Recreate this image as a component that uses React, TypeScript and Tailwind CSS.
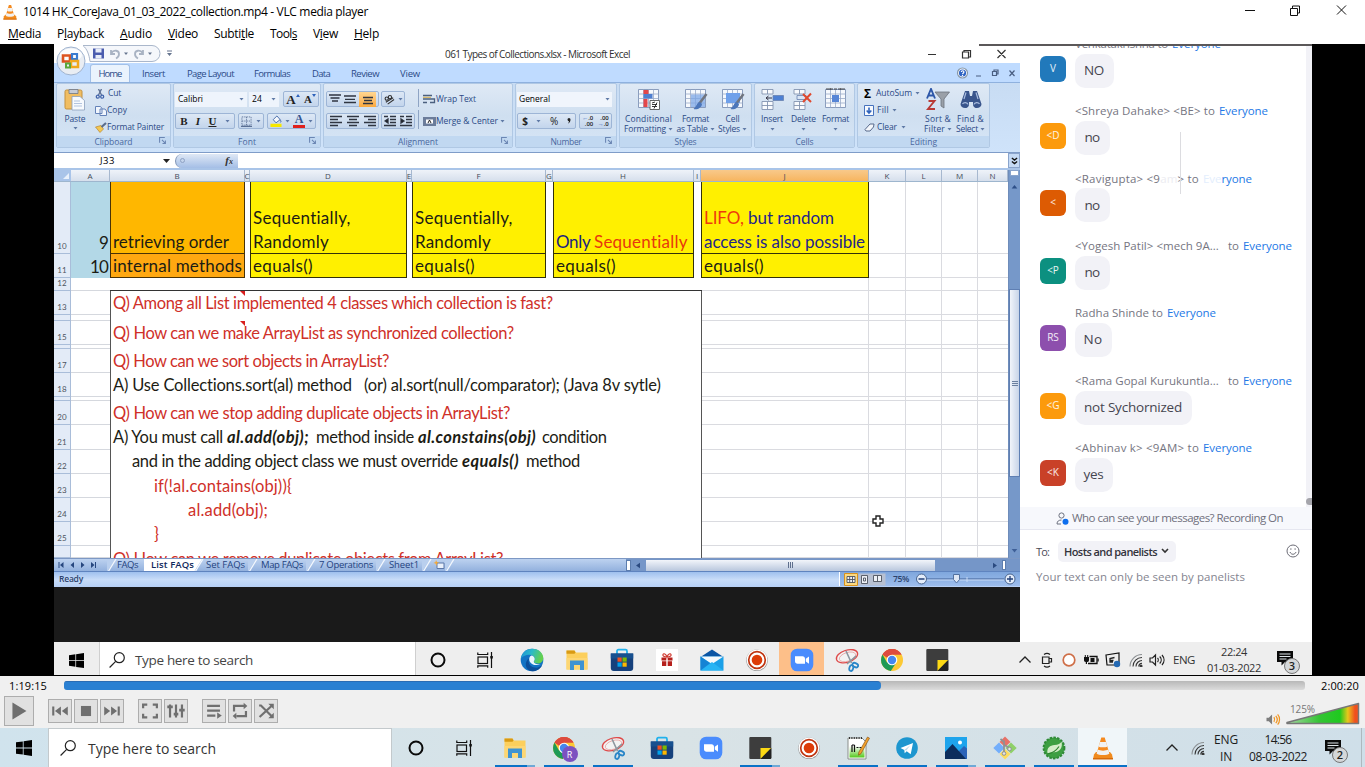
import React, { useLayoutEffect, useRef, useState } from "react";

type Kids = { children?: React.ReactNode };

/* Text that is spaced so that it fills a given width exactly. */
function T({ w, c = "", children }: { w: number; c?: string } & Kids) {
  const ref = useRef<HTMLSpanElement>(null);
  const [gap, setGap] = useState(0);
  useLayoutEffect(() => {
    const el = ref.current;
    if (!el) return;
    const n = (el.textContent || "").length;
    setGap((w - el.getBoundingClientRect().width) / Math.max(n, 1));
  }, [w]);
  return (
    <span className={`block shrink-0 whitespace-pre ${c}`} style={{ width: w }}>
      <span ref={ref} className="inline-block" style={{ letterSpacing: gap }}>
        {children}
      </span>
    </span>
  );
}

/* ---------- application icons ---------- */

const Cone = ({ c }: { c: string }) => (
  <svg viewBox="0 0 24 24" className={c}>
    <path d="M3 18.5L5 16h14l2 2.500 1 4.500H2z" fill="#f08a1d" />
    <path d="M10.300 1.500h3.400L18.500 18c-2 2.300-11 2.300-13 0z" fill="#f58a1f" />
    <path d="M9 6h6l1.300 4.400c-2 1.200-6.600 1.200-8.600 0zM6.800 13.500c2.500 1.500 8 1.500 10.400 0l1.200 4c-2 2-10.800 2-12.800 0z" fill="#f1f1f1" />
    <path d="M2 22h20v1.500H2z" fill="#d66a0a" />
  </svg>
);
const WinLogo = ({ c }: { c: string }) => (
  <svg viewBox="0 0 16 16" className={c} fill="#000">
    <path d="M0 2.300L6.800 1.400V7.600H0zM7.600 1.300L16 0v7.600H7.600zM0 8.400h6.800v6.200L0 13.700zM7.600 8.400H16V16l-8.400-1.200z" />
  </svg>
);
const Magnifier = ({ c }: { c: string }) => (
  <svg viewBox="0 0 16 16" className={c} fill="none" stroke="#222" strokeWidth="1.200">
    <circle cx="10.300" cy="5.700" r="5" />
    <path d="M6.700 9.300L.6 15.500" />
  </svg>
);
const Cortana = () => (
  <svg viewBox="0 0 16 16" className="size-4 shrink-0">
    <circle cx="8" cy="8" r="6.500" fill="none" stroke="#0a0a0a" strokeWidth="2" />
  </svg>
);
const TaskView = () => (
  <svg viewBox="0 0 16 16" className="size-4 shrink-0" fill="none" stroke="#111" strokeWidth="1.200">
    <rect x="1" y="5" width="9.500" height="6.500" />
    <path d="M.8.500v2h9.900v-2M.8 15.800v-2h9.900v2M14.500 0v16" />
    <rect x="13.300" y="4" width="2.500" height="2.500" fill="#111" stroke="none" />
  </svg>
);
const Edge = () => (
  <svg viewBox="0 0 24 24" className="size-6 shrink-0">
    <defs>
      <linearGradient id="eg" x1="0" y1="0" x2="1" y2=".3">
        <stop offset="0" stopColor="#1b8fd6" />
        <stop offset=".5" stopColor="#2bb9c9" />
        <stop offset="1" stopColor="#63d04e" />
      </linearGradient>
    </defs>
    <circle cx="12" cy="12" r="11.300" fill="#1273c4" />
    <path d="M.9 11C1.500 4.500 6.500.7 12.300.7c7 0 11 5 11 9.300 0 3.500-2.500 5.500-5.500 5.500-2.500 0-4-1-4-2 0-.8.900-1 .9-2.700 0-2-2-4-5-4C5.500 6.800 2 8.500.9 11z" fill="url(#eg)" />
    <path d="M9.500 10c-2 3-.8 8.500 5 9.500 3.200.6 6-.8 7.500-2.500-1.500 4-5.500 6.300-9.700 6.300C5 22.500 3.500 13.500 9.500 10z" fill="#0c4f9a" />
    <path d="M14.700 11c0-1.500-1-3-3-3.500-2.300.5-3.200 3.500-1.700 6.500 2 3.500 7 4 11.500 1.800-3.500 1.200-7.700.2-7.700-2.200 0-.8.900-1 .9-2.600z" fill="#eaf5fb" />
  </svg>
);
const Folder = () => (
  <svg viewBox="0 0 24 24" className="size-6 shrink-0">
    <path d="M1.500 2.500h8l1.500 2h11.500v17h-21z" fill="#fccf5c" />
    <path d="M1.500 2.500h8l1 2-1 1.200h-8z" fill="#d99a13" />
    <path d="M1.500 10h21v11.500h-21z" fill="#fdd673" />
    <path d="M5 22v-9.500h14V22h-4v-5H9v5z" fill="#3f93d2" />
  </svg>
);
const Store = () => (
  <svg viewBox="0 0 24 24" className="size-6 shrink-0">
    <path d="M7 6V3.200c0-.9.600-1.500 1.400-1.500h7.200c.8 0 1.400.6 1.400 1.500V6" fill="none" stroke="#21b1ec" strokeWidth="1.800" />
    <path d="M.8 5.500h22.400V20c0 2-1 3-3 3H3.800c-2 0-3-1-3-3z" fill="#16417c" />
    <path d="M.8 5.500h22.400v5H.8z" fill="#17508f" />
    <path d="M7.500 9.500h4.200v4.200H7.500z" fill="#f05021" />
    <path d="M12.500 9.500h4.200v4.200h-4.200z" fill="#7eb900" />
    <path d="M7.500 14.500h4.200v4.200H7.500z" fill="#00a2ec" />
    <path d="M12.500 14.500h4.200v4.200h-4.200z" fill="#fdb800" />
  </svg>
);
const Gift = () => (
  <svg viewBox="0 0 24 24" className="size-6 shrink-0">
    <path d="M1 1h22v22H1z" fill="#fff" />
    <path d="M6.500 9.500h4.800v3H6.500zM12.700 9.500h4.800v3h-4.800zM7 13.300h4.300V18H7zM12.700 13.300H17V18h-4.300z" fill="#b5201c" />
    <path d="M12 9c-3 0-4.500-1-4-2.500s3-.8 4 2.500c1-3.300 3.500-4 4-2.500S15 9 12 9z" fill="none" stroke="#d03a30" strokeWidth="1.200" />
  </svg>
);
const Mail = () => (
  <svg viewBox="0 0 24 24" className="size-6 shrink-0">
    <path d="M.5 9L12 1.500 23.500 9z" fill="#0b56a5" />
    <path d="M.5 8.500h23v14H.5z" fill="#1ba0e8" />
    <path d="M.5 8.500h23L12 16z" fill="#f5f9fc" />
    <path d="M.5 22.500L12 14l11.500 8.500z" fill="#27b4f4" />
    <path d="M.5 8.500v14L10 15.300z" fill="#1583d4" />
  </svg>
);
const Rec = () => (
  <svg viewBox="0 0 24 24" className="size-6 shrink-0">
    <circle cx="12" cy="12.300" r="10.800" fill="#9b9b9b" />
    <circle cx="12" cy="11.800" r="10.400" fill="#fff" />
    <circle cx="12" cy="12" r="8.300" fill="none" stroke="#bf3511" strokeWidth="1.700" />
    <circle cx="12" cy="12" r="5.300" fill="#dd3c08" />
  </svg>
);
const Zoom = () => (
  <svg viewBox="0 0 24 24" className="size-6 shrink-0">
    <rect x=".7" y=".7" width="22.600" height="22.600" rx="6.500" fill="#4a8cfd" />
    <path d="M5 8.300h7.500c1.500 0 2.500 1 2.500 2.500v5H7.500C6 15.800 5 14.800 5 13.300zM15.800 10.800L19 8.500v7.200l-3.200-2.300z" fill="#fff" />
  </svg>
);
const Snip = () => (
  <svg viewBox="0 0 24 24" className="size-6 shrink-0" fill="none">
    <ellipse cx="12" cy="8.200" rx="11" ry="6" transform="rotate(-18 12 8.200)" fill="#f3f3f3" stroke="#de4a4a" strokeWidth="1.300" />
    <ellipse cx="12.500" cy="9" rx="8.500" ry="4.300" transform="rotate(-18 12 9)" stroke="#e59a9a" strokeWidth=".7" />
    <path d="M11 3l5.500 12M21 8l-9 8" stroke="#8c979f" strokeWidth="1.600" />
    <ellipse cx="20.300" cy="17" rx="3" ry="2" transform="rotate(25 20 17)" stroke="#2a86c8" strokeWidth="1.800" />
    <ellipse cx="16.300" cy="20" rx="1.900" ry="3" transform="rotate(15 16 20)" stroke="#2a86c8" strokeWidth="1.800" />
  </svg>
);
const Chrome = ({ badge }: { badge?: boolean }) => (
  <span className="relative block size-6 shrink-0">
    <svg viewBox="0 0 24 24" className="size-6">
      <circle cx="12" cy="12" r="11" fill="#fcc934" />
      <path d="M12 12L2.500 6.500A11 11 0 0 1 21.500 6.500H12z" fill="#dd4b3e" />
      <path d="M12 12L7 14.500 2.500 6.500a11 11 0 0 0 8.300 16.400L16 15z" fill="#1e9a55" />
      <path d="M2.500 6.500A11 11 0 0 1 21.500 6.500H12a5.500 5.500 0 0 0-5 3.300z" fill="#dd4b3e" />
      <circle cx="12" cy="12" r="5.300" fill="#fff" />
      <circle cx="12" cy="12" r="4.200" fill="#4587ee" />
    </svg>
    {badge && (
      <span className="absolute left-[10px] top-[10px] flex size-4 items-center justify-center rounded-full bg-[#7c51c0] text-[9px] leading-none text-white">R</span>
    )}
  </span>
);
const Sticky = () => (
  <svg viewBox="0 0 24 24" className="size-6 shrink-0">
    <rect x="1.300" y="1" width="22" height="22" rx="1" fill="#3d3d3d" />
    <path d="M12.500 12H23.300L12.500 23z" fill="#fcd914" />
    <path d="M23.300 12L12.500 23h9.800l1-1z" fill="#222" />
  </svg>
);
const Notepad = () => (
  <svg viewBox="0 0 24 24" className="size-6 shrink-0">
    <defs>
      <linearGradient id="ng" x1="0" y1="0" x2="0" y2="1">
        <stop offset=".2" stopColor="#fff" />
        <stop offset="1" stopColor="#54c91c" />
      </linearGradient>
    </defs>
    <path d="M2 2h14l4 4v17H2z" fill="#fff" stroke="#8a8f8a" />
    <path d="M3.500 7h15v14.500h-15z" fill="url(#ng)" />
    <path d="M3 2h14" stroke="#333" strokeDasharray="1 1.400" strokeWidth="2" />
    <path d="M6 16V9M8.500 16V9M6 9h2.500M10.500 11.500h2M13.500 11.500h2" stroke="#111" strokeWidth="1.200" fill="none" />
    <path d="M21.500 1l2 1.200-8.500 15.500-2.500 1.500.3-3z" fill="#f2a02c" stroke="#7a4a12" strokeWidth=".6" />
  </svg>
);
const Telegram = () => (
  <svg viewBox="0 0 24 24" className="size-6 shrink-0">
    <circle cx="12" cy="12" r="10.800" fill="#1d96cf" />
    <path d="M5.500 12L18 7l-2.300 11.300-4-3-2 1.900-.4-3.200z" fill="#fff" />
    <path d="M9.300 14l6-4.800-4 5.300z" fill="#b9d9ea" />
  </svg>
);
const Photos = () => (
  <svg viewBox="0 0 24 24" className="size-6 shrink-0">
    <path d="M1 1h22v22H1z" fill="#1ea4ec" />
    <path d="M23 12.500l-3-2.500-6 6 4 7h5z" fill="#2c63b8" />
    <path d="M1 16l7.500-8L22 23H1z" fill="#0c2d5c" />
    <circle cx="16" cy="6.500" r="2" fill="#fff" />
  </svg>
);
const Git = () => (
  <svg viewBox="0 0 24 24" className="size-6 shrink-0">
    <path d="M12 .5l5.500 5.500-5.500 5L6.500 6z" fill="#e77167" />
    <path d="M6 6.500l5.500 5.500-5.500 5.500L.3 12z" fill="#73aefb" />
    <path d="M18 6.500l5.700 5.500-5.700 5.500-5.500-5.500z" fill="#8fd069" />
    <path d="M12 13l5.500 5L12 23.500 6.500 18z" fill="#fcdc60" />
    <path d="M11 4.500v13M11 9c3 1 5 2 5.500 4M11 6L7.500 3" stroke="#8d9295" strokeWidth="1.700" fill="none" />
    <circle cx="11" cy="17.500" r="1.800" fill="#e5e5e5" stroke="#8d9295" />
    <circle cx="16.500" cy="13" r="1.800" fill="#e5e5e5" stroke="#8d9295" />
  </svg>
);
const Spring = () => (
  <svg viewBox="0 0 24 24" className="size-6 shrink-0">
    <circle cx="12" cy="12" r="10.400" fill="#3d9f42" stroke="#2f8a36" strokeWidth="2" strokeDasharray="2.500 1.200" />
    <path d="M19.500 5.500c1.500 6-1.500 10.500-7.500 10.800-3 .2-5 .3-6.500 1.200C4.500 11.500 8 9.500 12.500 9c3.500-.3 6-1 7-3.500z" fill="#d3ecc8" />
    <path d="M5 18c5-.5 9-3 12-7.500" stroke="#2d8430" strokeWidth="1.200" fill="none" />
  </svg>
);
const Chevron = () => (
  <svg viewBox="0 0 14 14" className="size-3.5 shrink-0" fill="none" stroke="#222" strokeWidth="1.300">
    <path d="M1.500 9.500L7 4l5.500 5.500" />
  </svg>
);
const Wifi = () => (
  <svg viewBox="0 0 14 14" className="size-3.5 shrink-0" fill="none" stroke="#333" strokeWidth="1.100">
    <path d="M1 13.500A12 12 0 0 1 13 1.500" stroke="#8b8f92" />
    <path d="M4 13.500a9 9 0 0 1 9-9M7 13.500a6 6 0 0 1 6-6M9.700 13.500a3.500 3.500 0 0 1 3.300-3.300" />
    <circle cx="12" cy="13" r="1" fill="#333" />
  </svg>
);
const Notif = ({ n }: { n: string }) => (
  <span className="relative block h-6 w-6 shrink-0">
    <svg viewBox="0 0 24 24" className="size-6">
      <path d="M1 2h16v11H9l-3.500 3.500V13H1z" fill="#0a0a0a" />
      <path d="M3.500 5h11M3.500 7.500h11M3.500 10h7" stroke="#dfe6ea" strokeWidth="1" />
    </svg>
    <span className="absolute left-[8px] top-[9px] flex size-4 items-center justify-center rounded-full border border-[#777] bg-[#d4d7d9] text-[11px] font-semibold leading-none text-[#222]">{n}</span>
  </span>
);

/* ---------- Excel ---------- */

const Caret = ({ c = "" }: { c?: string }) => (
  <svg viewBox="0 0 5 3" className={`h-[3px] w-[5px] shrink-0 ${c}`}>
    <path d="M.5 0h4L2.500 2.500z" fill="#5f7aa6" />
  </svg>
);
const Launcher = () => (
  <svg viewBox="0 0 6 6" className="absolute right-[4px] top-[1px] size-[7px]" fill="none" stroke="#6b86b3" strokeWidth=".9">
    <path d="M.5 5V.5H5M2.500 2.500l3 3M5.500 3v2.500H3" />
  </svg>
);
function Group({ c, label, lw, launch, children }: { c: string; label: string; lw: number; launch?: boolean } & Kids) {
  return (
    <div className={`flex h-[65px] shrink-0 flex-col overflow-hidden rounded-[2px] border border-[#b0c8e4] bg-linear-to-b from-[#dfe9f5] via-[#cfdff0] to-[#d6e5f6] ${c}`}>
      <div className="h-[52px]">{children}</div>
      <div className="relative flex h-[11px] items-center justify-center bg-[#c1d8f1] pt-px leading-none text-[#4b68a0]">
        <T w={lw}>{label}</T>
        {launch && <Launcher />}
      </div>
    </div>
  );
}
const Box = ({ c = "", children }: { c?: string } & Kids) => (
  <div className={`flex h-4 shrink-0 items-center justify-around rounded-[2px] border border-[#9db5d6] bg-linear-to-b from-[#dde8f5] to-[#c3d5ec] ${c}`}>{children}</div>
);
const Lines = ({ d }: { d: string }) => (
  <svg viewBox="0 0 12 12" className="size-3 shrink-0" stroke="#2f3541" strokeWidth="1.300">
    <path d={d} />
  </svg>
);
const Scissors = () => (
  <svg viewBox="0 0 10 10" className="size-[10px]" fill="none" stroke="#4365ab" strokeWidth="1.300">
    <path d="M3.500 0l3 6M6.500 0l-3 6" stroke="#5c6f93" />
    <circle cx="2.800" cy="7.700" r="1.500" />
    <circle cx="7.200" cy="7.700" r="1.500" />
  </svg>
);
const CopyI = () => (
  <svg viewBox="0 0 12 10" className="h-[10px] w-3">
    <path d="M.5.500h5l1.500 2v5H.5zM5 3h5l1.500 2v4.500H5z" fill="#f1f6fd" stroke="#6482b8" />
  </svg>
);
const Brush = () => (
  <svg viewBox="0 0 12 11" className="h-[11px] w-3">
    <path d="M.5 5L6 3.500 8.500 7 5 10.500z" fill="#f4c753" stroke="#b07c22" strokeWidth=".6" />
    <path d="M6.500 5L11 1" stroke="#5b6d8c" strokeWidth="2.200" />
  </svg>
);
const PasteI = () => (
  <svg viewBox="0 0 22 23" className="h-[23px] w-[22px]">
    <rect x="1" y="2" width="17" height="19" rx="1.500" fill="#f0bd62" stroke="#c3913f" />
    <path d="M5 1.500h9v4H5z" fill="#c7ccd6" stroke="#6e7787" strokeWidth=".8" />
    <path d="M8 8.500h8l4.500 4V22H8z" fill="#f7fafe" stroke="#8c9fbd" strokeWidth=".8" />
    <path d="M10 13h6M10 15.500h8M10 18h8" stroke="#b3c4df" />
  </svg>
);
const TableI = ({ kind }: { kind: "cond" | "table" | "cell" | "ins" | "del" | "fmt" }) => (
  <svg viewBox="0 0 24 23" className="h-[23px] w-6">
    {kind !== "ins" && kind !== "del" && (
      <>
        <path d="M1.500 1.500h20v18h-20z" fill="#f6f9fd" stroke="#7f93b5" strokeWidth=".9" />
        <path d="M1.500 6h20M1.500 10.500h20M1.500 15h20M6.500 1.500v18M11.500 1.500v18M16.500 1.500v18" stroke="#9aabc8" strokeWidth=".8" />
      </>
    )}
    {kind === "cond" && (
      <>
        <path d="M6.500 2h5v4h-5zM6.500 11h4v8h-4z" fill="#e3474a" />
        <path d="M6.500 6h9v4.500h-9z" fill="#4f7fd0" />
        <path d="M13 12.500h9.500v9H13z" fill="#fff" stroke="#555" strokeWidth=".9" />
        <path d="M15 15l3-1M15 16.500h5M15 18.500h5M17 20.500l3-6" stroke="#222" strokeWidth=".9" />
      </>
    )}
    {kind === "table" && <path d="M7 6.500h14v12.500H7z" fill="#7ea7e6" opacity=".75" />}
    {kind === "cell" && <path d="M5 5h14v10H5z" fill="#6fa0ea" />}
    {(kind === "table" || kind === "cell") && (
      <>
        <path d="M22.500 6L15 16" stroke="#70757f" strokeWidth="2.500" />
        <path d="M16 14c-3 0-3 4-6.500 7 4 1 8-1 8.500-5z" fill="#4b76ba" />
      </>
    )}
    {(kind === "ins" || kind === "del") && (
      <>
        <path d="M2 1.500h11V6H2zM2 13.500h11v8H2zM7.500 1.500V6M7.500 13.500v8M2 17.500h11" fill="#f8fafd" stroke="#8394b0" strokeWidth=".9" />
        <path d={kind === "ins" ? "M13 7.500h10.500v5H13z" : "M5 7.500h9v4H5z"} fill={kind === "ins" ? "#4d80d3" : "#dbe6f5"} stroke="#6a83b0" strokeWidth=".8" />
      </>
    )}
    {kind === "ins" && <path d="M6 10h6M8.500 8L6 10l2.500 2" stroke="#334" fill="none" />}
    {kind === "del" && <path d="M11 6l8 8M19 5.500L11 14" stroke="#e0492e" strokeWidth="2" />}
    {kind === "fmt" && (
      <>
        <path d="M8 7h7v7H8z" fill="#5685d6" />
        <path d="M2 1h19M6 0v2M17 0v2" stroke="#333" strokeWidth=".9" strokeDasharray="3 1" />
      </>
    )}
  </svg>
);

function Big({ c, icon, l1, w1, l2, w2 }: { c: string; icon: React.ReactNode; l1: string; w1: number; l2?: string; w2?: number }) {
  return (
    <div className={`flex shrink-0 flex-col items-center pt-[4px] ${c}`}>
      {icon}
      <div className="mt-[3px] flex h-[10px] items-center"><T w={w1}>{l1}</T></div>
      <div className="flex h-[10px] items-center gap-[2px]">
        {l2 && w2 && <T w={w2}>{l2}</T>}
        <Caret />
      </div>
    </div>
  );
}

function Ribbon() {
  return (
    <div className="flex h-[70px] items-start gap-[2px] border-t border-[#8fb1de] bg-linear-to-b from-[#c8dcf3] to-[#cfe3fa] pl-[2px] text-[8.500px] leading-none text-[#2c4a86]">
      <Group c="w-[115px]" label="Clipboard" lw={38} launch>
        <div className="flex">
          <div className="flex w-[30px] shrink-0 flex-col items-center pl-[6px] pt-[4px]">
            <PasteI />
            <div className="mt-[3px] flex h-[10px] items-center"><T w={21}>Paste</T></div>
            <Caret c="mt-[3px]" />
          </div>
          <div className="flex flex-col pl-[8px] pt-px">
            <div className="flex h-[17px] items-center gap-[3px]"><Scissors /><T w={13}>Cut</T></div>
            <div className="flex h-[17px] items-center"><CopyI /><T w={20}>Copy</T></div>
            <div className="flex h-[16px] items-center"><Brush /><T w={57}>Format Painter</T></div>
          </div>
        </div>
      </Group>
      <Group c="w-[148px]" label="Font" lw={18} launch>
        <div className="flex h-[23px] items-end pl-[1px] text-black">
          <div className="flex h-[15px] w-[72px] items-center justify-between bg-[#eef4fc] px-[3px]"><T w={25}>Calibri</T><Caret /></div>
          <div className="ml-[2px] flex h-[15px] w-[30px] items-center justify-between bg-[#eef4fc] px-[3px]"><T w={10}>24</T><Caret /></div>
          <Box c="ml-[4px] w-[36px]">
            <span className="flex items-start font-['Liberation_Serif'] text-[13px] font-bold leading-[13px] text-[#222]">A<svg viewBox="0 0 4 3" className="mt-px h-[3px] w-[4px]"><path d="M0 3h4L2 0z" fill="#2f63bb" /></svg></span>
            <span className="flex items-start font-['Liberation_Serif'] text-[11px] font-bold leading-[13px] text-[#222]">A<svg viewBox="0 0 4 3" className="mt-px h-[3px] w-[4px]"><path d="M0 0h4L2 3z" fill="#2f63bb" /></svg></span>
          </Box>
        </div>
        <div className="flex h-[22px] items-end pl-[1px] text-[#222]">
          <Box c="w-[60px] font-['Liberation_Serif'] text-[11px]"><b>B</b><b className="italic">I</b><b className="underline">U</b><Caret /></Box>
          <Box c="ml-[3px] w-[26px]">
            <svg viewBox="0 0 12 12" className="size-[11px]" stroke="#5a6f94" strokeWidth=".9" fill="none"><path d="M1 1h10v9H1zM6 1v9M1 5.500h10" strokeDasharray="1.500 1" /><path d="M0 11.300h12" strokeWidth="1.300" /></svg>
            <Caret />
          </Box>
          <Box c="ml-[3px] w-[49px]">
            <svg viewBox="0 0 12 13" className="h-[12px] w-3"><path d="M3 5l4-4 3.500 4L6 8.500z" fill="#f5f8fc" stroke="#4469a8" /><path d="M10 5c2 1 1.500 3 .5 3" stroke="#4469a8" fill="none" /><path d="M0 9.500h12V13H0z" fill="#f7e800" /></svg>
            <Caret />
            <span className="flex h-[14px] w-3 flex-col items-center border-b-[3px] border-[#e0201c] font-['Liberation_Serif'] text-[12px] font-bold leading-[11px] text-[#33528f]">A</span>
            <Caret />
          </Box>
        </div>
      </Group>
      <Group c="w-[190px]" label="Alignment" lw={40} launch>
        <div className="flex h-[23px] items-end pl-[2px]">
          <Box c="w-[53px]">
            <Lines d="M0 2h12M1.500 5h9M3 8h6" />
            <Lines d="M0 3h12M1 6.300h10M0 9.500h12" />
            <span className="flex h-[15px] w-[17px] items-center justify-center bg-linear-to-b from-[#ffd690] to-[#fba93c]"><Lines d="M1 4.500h10M2 7.500h8M1 10.500h10" /></span>
          </Box>
          <Box c="ml-[2px] w-[24px]">
            <svg viewBox="0 0 12 12" className="size-[11px]" stroke="#333" strokeWidth="1.200" fill="none"><circle cx="3" cy="5" r="1.800" /><circle cx="6.500" cy="3.500" r="1.800" /><path d="M2 9l8-5M4 11l7-5" /></svg>
            <Caret />
          </Box>
          <span className="ml-[13px] h-[18px] w-px bg-[#8ea4c4]" />
          <div className="ml-[4px] flex h-4 items-center">
            <svg viewBox="0 0 13 11" className="h-[11px] w-[13px]" stroke="#4b607f" fill="none"><path d="M0 1.500h9M0 5h11.500v3.500H7M0 8.500h4" strokeWidth="1.300" /><path d="M0 3.300h8" stroke="#d9b04c" /></svg>
            <T w={40}>Wrap Text</T>
          </div>
        </div>
        <div className="flex h-[22px] items-end pl-[2px]">
          <Box c="w-[53px]">
            <Lines d="M0 1.500h12M0 4.500h8M0 7.500h12M0 10.500h8" />
            <Lines d="M0 1.500h12M2 4.500h8M0 7.500h12M2 10.500h8" />
            <Lines d="M0 1.500h12M4 4.500h8M0 7.500h12M4 10.500h8" />
          </Box>
          <Box c="ml-[2px] w-[34px]">
            <Lines d="M0 1.500h4M6 1.500h6M6 4.500h6M6 7.500h6M0 10.500h12M1 6l3-2v4z" />
            <Lines d="M0 1.500h4M6 1.500h6M6 4.500h6M6 7.500h6M0 10.500h12M4 6L1 4v4z" />
          </Box>
          <span className="ml-[3px] h-[19px] w-px bg-[#8ea4c4]" />
          <div className="ml-[4px] flex h-4 items-center">
            <svg viewBox="0 0 13 11" className="h-[11px] w-[13px]"><path d="M0 1h13v9H0z" fill="#6b7d9b" /><path d="M3 3.500h7v4H3z" fill="#fff" /><path d="M5 7l1.500-3L8 7" stroke="#222" fill="none" /></svg>
            <T w={62}>Merge &amp; Center</T>
            <Caret c="ml-[2px]" />
          </div>
        </div>
      </Group>
      <Group c="w-[102px]" label="Number" lw={31} launch>
        <div className="flex h-[23px] items-end pl-[1px] text-black">
          <div className="flex h-[15px] w-[95px] items-center justify-between bg-[#f0f5fc] px-[2px]"><T w={31}>General</T><Caret /></div>
        </div>
        <div className="flex h-[22px] items-end pl-[1px] text-[10px] text-[#222]">
          <Box c="w-[59px]">
            <b>$</b><Caret /><span>%</span>
            <svg viewBox="0 0 4 6" className="h-[6px] w-[4px]"><path d="M.5 1.500a1.500 1.500 0 1 1 3 0C3.500 3.500 2.500 5 1 5.500c.8-1 1-1.700.8-2.500C1 3 .5 2.300.5 1.500z" fill="#222" /></svg>
          </Box>
          <Box c="ml-[3px] w-[33px] text-[6px] leading-[6px]">
            <span className="text-right font-semibold"><b className="text-[#3461b5]">←</b>.0<br />.00</span>
            <span className="text-right font-semibold">.00<br /><b className="text-[#3461b5]">→</b>.0</span>
          </Box>
        </div>
      </Group>
      <Group c="w-[133px]" label="Styles" lw={22}>
        <div className="flex pl-[2px]">
          <Big c="w-[53px]" icon={<TableI kind="cond" />} l1="Conditional" w1={47} l2="Formatting" w2={42} />
          <Big c="w-[41px]" icon={<TableI kind="table" />} l1="Format" w1={27} l2="as Table" w2={31} />
          <Big c="w-[33px]" icon={<TableI kind="cell" />} l1="Cell" w1={14} l2="Styles" w2={22} />
        </div>
      </Group>
      <Group c="w-[101px]" label="Cells" lw={18}>
        <div className="flex pl-[2px]">
          <Big c="w-[30px]" icon={<TableI kind="ins" />} l1="Insert" w1={22} />
          <Big c="w-[33px]" icon={<TableI kind="del" />} l1="Delete" w1={25} />
          <Big c="w-[31px]" icon={<TableI kind="fmt" />} l1="Format" w1={27} />
        </div>
      </Group>
      <Group c="w-[133px]" label="Editing" lw={27}>
        <div className="flex">
          <div className="flex w-[62px] shrink-0 flex-col pl-[6px] pt-px">
            <div className="flex h-[17px] items-center"><b className="w-[13px] text-[12px] text-black">Σ</b><T w={36}>AutoSum</T><Caret c="ml-[3px]" /></div>
            <div className="flex h-[17px] items-center">
              <svg viewBox="0 0 10 11" className="mr-[3px] h-[11px] w-[10px]"><path d="M.5.500h9v10h-9z" fill="#f7fafe" stroke="#4672bd" /><path d="M5 2.500v5M2.700 5.500L5 8l2.300-2.500" stroke="#2f63bb" strokeWidth="1.600" fill="none" /></svg>
              <T w={12}>Fill</T><Caret c="ml-[3px]" />
            </div>
            <div className="flex h-[16px] items-center">
              <svg viewBox="0 0 11 9" className="mr-[2px] h-[9px] w-[11px]"><path d="M1 6.500L6 1h4L9.500 4 6 8H2z" fill="#f4f7fb" stroke="#586a8c" /></svg>
              <T w={20}>Clear</T><Caret c="ml-[4px]" />
            </div>
          </div>
          <Big
            c="ml-[1px] w-[34px]"
            icon={
              <svg viewBox="0 0 24 23" className="h-[23px] w-6">
                <path d="M1 10.500L5 1l4 9.500M2.500 7.500h5" stroke="#2d57a8" strokeWidth="1.900" fill="none" />
                <path d="M2.500 13h6L2 21h7" stroke="#b83a36" strokeWidth="1.900" fill="none" />
                <path d="M9 4h14.500L18 11v9l-3-2v-7z" fill="#9aa0a8" stroke="#6d747e" strokeWidth=".8" />
              </svg>
            }
            l1="Sort &amp;" w1={26} l2="Filter" w2={21}
          />
          <Big
            c="w-[31px]"
            icon={
              <svg viewBox="0 0 24 23" className="h-[23px] w-6">
                <path d="M6 3h4l1 5h2l1-5h4l4.500 13c0 5-8 5.500-8.500 1v-3h-4v3c-.5 4.500-8.500 4-8.500-1z" fill="#39558c" />
                <path d="M3.500 16c1-2 5-2 5.500.5M15 16.500c.5-2.500 4.500-2.500 5.500-.5M7 4.500L5 11M17 4.500L19 11" stroke="#a9bddf" strokeWidth="1.200" fill="none" />
              </svg>
            }
            l1="Find &amp;" w1={27} l2="Select" w2={22}
          />
        </div>
      </Group>
    </div>
  );
}

/* ---------- worksheet ---------- */

const YCELL = "shrink-0 border-x border-b border-[#33310a] bg-[#fff000] pl-[2px] *:translate-y-px";

function RowHead({ n }: { n: string }) {
  return (
    <div className="flex w-[17px] shrink-0 items-end justify-center border-b border-r border-[#a9bdd9] bg-[#e3ebf7] pb-[3px] text-[8px] leading-none text-[#4d5460]">{n}</div>
  );
}
function TailCells() {
  return (
    <>
      <div className="w-[37px] shrink-0 border-b border-r border-[#dadbe0]" />
      <div className="w-[36px] shrink-0 border-b border-r border-[#dadbe0]" />
      <div className="w-[36px] shrink-0 border-b border-r border-[#dadbe0]" />
      <div className="w-[30px] shrink-0 border-b border-[#dadbe0]" />
    </>
  );
}
function NoteRow({ h, n = "", mark, lift, children }: { h: string; n?: string; mark?: boolean; lift?: boolean } & Kids) {
  return (
    <div className={`flex shrink-0 overflow-hidden text-[16.500px] ${h}`}>
      <RowHead n={n} />
      <div className="w-[39px] shrink-0 border-b border-[#d5d8de]" />
      <div className={`relative flex w-[592px] shrink-0 items-end border-x border-[#555] pl-[2px] ${lift ? "*:-translate-y-px" : ""}`}>
        {children}
        {mark && (
          <svg viewBox="0 0 5 5" className="absolute left-[129px] top-0 size-[5px]"><path d="M0 0h5v5z" fill="#d81e1e" /></svg>
        )}
      </div>
      <div className="w-[167px] shrink-0 border-b border-r border-[#dadbe0]" />
      <TailCells />
    </div>
  );
}

const HEADS: [string, string][] = [
  ["A", "w-[39px]"], ["B", "w-[135px]"], ["C", "w-[5px]"], ["D", "w-[157px]"], ["E", "w-[5px]"], ["F", "w-[134px]"], ["G", "w-[7px]"],
  ["H", "w-[141px]"], ["I", "w-[7px]"], ["J", "w-[168px] bg-linear-to-b from-[#f8c98a] to-[#f7b55e]"], ["K", "w-[37px]"], ["L", "w-[36px]"], ["M", "w-[36px]"], ["N", "w-[30px]"],
];

function Sheet() {
  const red = "text-[#cf3029]";
  return (
    <div className="flex h-[388px]">
      <div className="flex w-[954px] shrink-0 flex-col overflow-hidden bg-white">
        <div className="flex h-3 shrink-0 border-b border-[#9eb6ce] bg-linear-to-b from-[#eff3f9] to-[#d6dfec] text-[8px] leading-none text-[#444c59]">
          <div className="flex w-[17px] shrink-0 items-end justify-end bg-[#a9c4e9] p-[2px]">
            <svg viewBox="0 0 6 6" className="size-[6px]"><path d="M6 0v6H0z" fill="#e8f0fb" /></svg>
          </div>
          {HEADS.map(([l, w]) => (
            <div key={l} className={`flex shrink-0 items-center justify-center border-r border-[#a7b8cf] ${w}`}>{l}</div>
          ))}
        </div>
        <div className="flex flex-1 flex-col overflow-hidden font-['Lato'] text-[17px] leading-[24px] text-[#1c1c14]">
          <div className="flex h-[72px] shrink-0 items-stretch">
            <RowHead n="10" />
            <div className="flex w-[39px] shrink-0 items-end justify-end bg-[#b3d8e7] pr-[2px] *:translate-y-px"><T w={9}>9</T></div>
            <div className="flex w-[135px] shrink-0 items-end border-x border-b border-[#4a3306] bg-[#ffb700] pl-[2px] *:translate-y-px"><T w={116}>retrieving order</T></div>
            <div className="w-[5px] shrink-0" />
            <div className={`flex w-[157px] flex-col justify-end ${YCELL}`}><T w={98}>Sequentially,</T><T w={76}>Randomly</T></div>
            <div className="w-[5px] shrink-0" />
            <div className={`flex w-[134px] flex-col justify-end ${YCELL}`}><T w={98}>Sequentially,</T><T w={76}>Randomly</T></div>
            <div className="w-[7px] shrink-0" />
            <div className={`flex w-[141px] items-end ${YCELL}`}><T w={38} c="text-[#1a1f80]">Only </T><T w={94} c="text-[#e8380d]">Sequentially</T></div>
            <div className="w-[7px] shrink-0" />
            <div className={`flex w-[168px] flex-col justify-end text-[#23248a] ${YCELL}`}>
              <T w={130}><span className="text-[#ee3a0c]">LIFO,</span> but random</T>
              <T w={161}>access is also possible</T>
            </div>
            <TailCells />
          </div>
          <div className="flex h-[24px] shrink-0">
            <RowHead n="11" />
            <div className="flex w-[39px] shrink-0 items-end justify-end bg-[#b3d8e7] pr-[2px] *:translate-y-px"><T w={18}>10</T></div>
            <div className="flex w-[135px] shrink-0 items-end border-x border-b border-[#4a3306] bg-[#ffa811] pl-[2px] *:translate-y-px"><T w={129}>internal methods</T></div>
            <div className="w-[5px] shrink-0" />
            <div className={`flex w-[157px] items-end ${YCELL}`}><T w={60}>equals()</T></div>
            <div className="w-[5px] shrink-0" />
            <div className={`flex w-[134px] items-end ${YCELL}`}><T w={60}>equals()</T></div>
            <div className="w-[7px] shrink-0" />
            <div className={`flex w-[141px] items-end ${YCELL}`}><T w={60}>equals()</T></div>
            <div className="w-[7px] shrink-0" />
            <div className={`flex w-[168px] items-end ${YCELL}`}><T w={60}>equals()</T></div>
            <TailCells />
          </div>
          <div className="flex h-[13px] shrink-0">
            <RowHead n="12" />
            <div className="w-[39px] shrink-0 border-b border-[#d5d8de]" />
            <div className="w-[592px] shrink-0 border-b border-[#333]" />
            <div className="w-[167px] shrink-0 border-b border-r border-[#dadbe0]" />
            <TailCells />
          </div>
          <NoteRow h="h-[24px]" n="13" mark><T w={440} c={red}>Q) Among all List implemented 4 classes which collection is fast?</T></NoteRow>
          <NoteRow h="h-[6px]" />
          <NoteRow h="h-[24px]" n="15" mark><T w={401} c={red}>Q) How can we make ArrayList as synchronized collection?</T></NoteRow>
          <NoteRow h="h-[4px]" />
          <NoteRow h="h-[24px]" n="17"><T w={276} c={red}>Q) How can we sort objects in ArrayList?</T></NoteRow>
          <NoteRow h="h-[24px]" n="18"><T w={548}>{"A) Use Collections.sort(al) method   (or) al.sort(null/comparator); (Java 8v sytle)"}</T></NoteRow>
          <NoteRow h="h-[4px]" />
          <NoteRow h="h-[24px]" n="20"><T w={397} c={red}>Q) How can we stop adding duplicate objects in ArrayList?</T></NoteRow>
          <NoteRow h="h-[25px]" n="21" lift>
            <T w={110}>A) You must call</T><T w={82} c="ml-[4px] font-bold italic">al.add(obj);</T><T w={98} c="ml-[7px]">method inside</T>
            <T w={118} c="ml-[4px] font-bold italic">al.constains(obj)</T><T w={65} c="ml-[6px]">condition</T>
          </NoteRow>
          <NoteRow h="h-[24px]" n="22" lift>
            <T w={326} c="ml-[19px]">and in the adding object class we must override</T><T w={57} c="ml-[4px] font-bold italic">equals()</T><T w={54} c="ml-[7px]">method</T>
          </NoteRow>
          <NoteRow h="h-[24px]" n="23"><T w={138} c={`ml-[41px] ${red}`}>{"if(!al.contains(obj)){"}</T></NoteRow>
          <NoteRow h="h-[24px]" n="24"><T w={80} c={`ml-[75px] ${red}`}>al.add(obj);</T></NoteRow>
          <NoteRow h="h-[24px]" n="25"><T w={5} c={`ml-[41px] ${red}`}>{"}"}</T></NoteRow>
          <NoteRow h="h-[12px]"><div className="h-[12px] pt-px"><T w={390} c={red}>Q) How can we remove duplicate objects from ArrayList?</T></div></NoteRow>
        </div>
      </div>
      <div className="flex w-3 flex-col border-l border-[#6e8cba] bg-[#7698c9]">
        <div className="mx-px h-[6px] border border-[#8aa4cc] bg-white" />
        <svg viewBox="0 0 7 5" className="mt-[9px] h-[4px] w-[7px] self-center"><path d="M0 4.500h7L3.500 0z" fill="#2d4f88" /></svg>
        <div className="mt-[100px] flex h-[188px] flex-col items-center justify-center gap-px border border-[#5f7fb3] bg-linear-to-r from-[#f1f4fa] to-[#c8d4e8]">
          <i className="block h-px w-[6px] bg-[#6b7f9f]" /><i className="block h-px w-[6px] bg-[#6b7f9f]" /><i className="block h-px w-[6px] bg-[#6b7f9f]" />
        </div>
        <svg viewBox="0 0 7 5" className="mt-[72px] h-[4px] w-[7px] self-center"><path d="M0 0h7L3.500 4.500z" fill="#3e5f97" /></svg>
      </div>
    </div>
  );
}

const SlashEnd = ({ white }: { white?: boolean }) => (
  <svg viewBox="0 0 10 13" className="h-[13px] w-[10px] shrink-0">
    <path d="M0 13L8 0H0z" fill={white ? "#fff" : "#b9cfee"} />
    <path d="M1 13L9 0" stroke="#f4f8fd" strokeWidth="1.300" />
  </svg>
);

function SheetTabs() {
  return (
    <div className="flex h-[13px] shrink-0 items-center border-t border-[#7d98c4] bg-linear-to-b from-[#bdd2f0] to-[#93b1de] text-[9.500px] leading-none text-[#24437f]">
      <svg viewBox="0 0 48 12" className="h-3 w-12 shrink-0" fill="#27477f">
        <path d="M5.500 3v6H4.500zM4.500 3h1v6h-1zM9.500 3v6L6 6zM20 3v6L16.500 6zM27 3v6l3.500-3zM37 3v6l3.500-3zM42 3v6h-1V3z" />
      </svg>
      <div className="ml-[5px] flex items-center"><SlashEnd /><T w={21}>FAQs</T></div>
      <div className="ml-[6px] flex h-[13px] items-center bg-white pl-[7px] font-semibold text-[#10295c]"><T w={43}>List FAQs</T></div>
      <SlashEnd white /><div className="w-[2px]" />
      <T w={39}>Set FAQs</T><div className="w-[3px]" /><SlashEnd /><div className="w-[3px]" />
      <T w={42}>Map FAQs</T><div className="w-[3px]" /><SlashEnd /><div className="w-[3px]" />
      <T w={54}>7 Operations</T><div className="w-[3px]" /><SlashEnd /><div className="w-[3px]" />
      <T w={30}>Sheet1</T><div className="w-[3px]" /><SlashEnd />
      <svg viewBox="0 0 12 10" className="ml-px h-[10px] w-3"><path d="M4 3h7v5.500H4z" fill="#e9f0fb" stroke="#5c78a9" /><path d="M3 0l1 2 2 .5-2 1L3.500 6l-1-2.500-2-.5 2-1z" fill="#f3a93a" /></svg>
      <SlashEnd />
      <div className="ml-auto flex h-[13px] w-[394px] shrink-0 items-center bg-[#7596c8]">
        <span className="h-[11px] w-[5px] border border-[#5c7dae] bg-white" />
        <svg viewBox="0 0 5 7" className="ml-[5px] h-[7px] w-[4px]"><path d="M5 0v7L0 3.500z" fill="#2b4a80" /></svg>
        <div className="ml-[6px] flex h-[11px] w-[289px] items-center justify-center gap-px bg-linear-to-b from-[#f2f5fa] to-[#b9c7dd]">
          <i className="h-[6px] w-px bg-[#5e6f8d]" /><i className="h-[6px] w-px bg-[#5e6f8d]" /><i className="h-[6px] w-px bg-[#5e6f8d]" />
        </div>
        <svg viewBox="0 0 5 7" className="ml-[58px] h-[7px] w-[4px]"><path d="M0 0v7l5-3.500z" fill="#2b4a80" /></svg>
        <span className="ml-[5px] h-[10px] w-[4px] border border-[#5c7dae] bg-white" />
      </div>
    </div>
  );
}

function StatusBar() {
  return (
    <div className="flex h-4 shrink-0 items-center border-t border-[#5f84bf] bg-linear-to-b from-[#9fc0ee] via-[#c8dcf8] to-[#b6d0f5] pb-px pl-[5px] text-[8.500px] font-semibold leading-none text-[#2c436d]">
      <T w={24}>Ready</T>
      <div className="ml-auto flex h-full w-[181px] items-center border-l border-white bg-linear-to-b from-[#7fa7dd] to-[#9dbdec] pl-[4px]">
        <svg viewBox="0 0 42 13" className="h-[13px] w-[42px]">
          <path d="M.5.500h13v12H.5z" fill="#fbd981" stroke="#d8921e" />
          <path d="M14.500.500h27v12h-27z" fill="#b8c1d2" />
          <path d="M3 3.500h8v6H3zM3 6.500h8M5.700 3.500v6M8.500 3.500v6M17.500 2.500h6v8h-6zM19.500 5h2v3h-2zM29.500 2.500h8v6h-8zM33.500 2.500v6" fill="#eef1f6" stroke="#4d535d" strokeWidth=".9" />
        </svg>
        <T w={16} c="ml-[7px]">75%</T>
        <svg viewBox="0 0 102 14" className="ml-[5px] h-[14px] w-[102px]">
          <path d="M12 7h78" stroke="#3e5f95" />
          <path d="M12 8h78" stroke="#c9dbf5" />
          <circle cx="7.500" cy="7" r="5" fill="#e4edfa" stroke="#48648f" />
          <circle cx="96" cy="7" r="5" fill="#e4edfa" stroke="#48648f" />
          <path d="M4.500 7h6M93 7h6M96 4v6" stroke="#22407a" strokeWidth="1.300" />
          <path d="M39.500 2.500h6v5l-3 3.500-3-3.500z" fill="#dfe7f4" stroke="#53719f" />
          <path d="M53 5v5" stroke="#c9dbf5" />
        </svg>
      </div>
    </div>
  );
}

function Excel() {
  return (
    <div className="flex h-[543px] flex-col">
      <div className="relative flex h-[19px] shrink-0 items-center bg-white leading-none">
        <svg viewBox="0 0 32 30" className="absolute left-0 top-[2px] z-10 h-[30px] w-8">
          <circle cx="17" cy="15" r="14" fill="#e9edf3" stroke="#9fb3cf" />
          <ellipse cx="17" cy="9" rx="11" ry="6.500" fill="#fff" opacity=".8" />
          <path d="M9 9.500h7v6H9z" fill="none" stroke="#dd5420" strokeWidth="2.600" />
          <path d="M18 8h5v5h-5z" fill="none" stroke="#3a7bd0" strokeWidth="2.200" />
          <path d="M17 15h7v6h-7z" fill="none" stroke="#f0a81c" strokeWidth="2.500" />
          <path d="M12 17.500h4v4h-4z" fill="none" stroke="#5aa83b" strokeWidth="2" />
        </svg>
        <svg viewBox="0 0 92 19" className="ml-[27px] h-[19px] w-[92px] shrink-0">
          <path d="M2 1.500h69a8 8 0 0 1 0 16H9C8 10 6 5 2 1.500z" fill="#f5f7fb" stroke="#aab7cb" />
          <path d="M12 4.500h11v10H12z" fill="#4b5cae" /><path d="M14.500 4.500h6v4h-6zM14.500 11h6v3.500h-6z" fill="#e7ecf7" />
          <path d="M30 6v4h4M30 9.500c3-4.500 8-3 8 .5 0 2-1 3.500-3 4.500M62 6v4h-4M62 9.500c-3-4.500-8-3-8 .5 0 2 1 3.500 3 4.500" fill="none" stroke="#a9b3c3" strokeWidth="1.800" />
          <path d="M43 8.500h4l-2 2.500zM67 8.500h4l-2 2.500zM86 9h5l-2.500 3zM86 6.500h5v1h-5z" fill="#66758f" />
        </svg>
        <T w={185} c="ml-[272px] pt-px text-[10px] text-[#303030]">061 Types of Collections.xlsx - Microsoft Excel</T>
        <svg viewBox="0 0 80 14" className="ml-[297px] h-[14px] w-20 shrink-0" fill="none" stroke="#333" strokeWidth="1.200">
          <path d="M1 7.500h8M70.500 3l8 8M78.500 3l-8 8M35.500 5h6v6h-6zM37 5V3.500h6.500v6.500H42" />
        </svg>
      </div>
      <div className="flex h-[19px] shrink-0 items-end bg-[#bfdbff] text-[9.500px] leading-none text-[#2b4a87]">
        <div className="ml-[36px] flex h-[18px] w-[40px] items-center justify-center rounded-t-[3px] border-x border-t border-[#a2c0e8] bg-[#eaf3fd]"><T w={23}>Home</T></div>
        <div className="flex h-[18px] flex-1 items-center pl-[12px] pt-px">
          <T w={23}>Insert</T><T w={47} c="ml-[22px]">Page Layout</T><T w={36} c="ml-[20px]">Formulas</T><T w={18} c="ml-[22px]">Data</T><T w={28} c="ml-[21px]">Review</T><T w={20} c="ml-[21px]">View</T>
          <svg viewBox="0 0 64 14" className="ml-auto mr-[2px] h-[14px] w-16" fill="none" stroke="#4b5f82" strokeWidth="1.200">
            <circle cx="8.500" cy="6" r="5" fill="#fff" stroke="#89a" /><circle cx="8.500" cy="6" r="3.600" fill="#2e64c4" stroke="none" />
            <path d="M7.300 5c0-1.700 2.600-1.700 2.600 0 0 1-1.300 1-1.300 2.300M8.500 8v1" stroke="#fff" />
            <path d="M22 9h5M38.500 4.500h4v4h-4zM40 4.500V3h4v4h-1.500M55.500 3.500l5 5.500M60.500 3.500L55.500 9" />
          </svg>
        </div>
      </div>
      <Ribbon />
      <div className="flex h-[18px] shrink-0 items-center border-b-2 border-t border-b-[#a9c4e8] border-t-[#7f9cc8] bg-white text-[9.500px] leading-none">
        <T w={15} c="ml-[46px] text-black">J33</T>
        <svg viewBox="0 0 7 4" className="ml-[48px] h-[4px] w-[7px]"><path d="M0 0h7L3.500 4z" fill="#222" /></svg>
        <div className="ml-[5px] flex h-[14px] w-[63px] items-center justify-between rounded-l-full border-l border-[#7f93b4] bg-linear-to-b from-[#dfe8f5] to-[#a4bee6] pl-[4px] pr-[5px]">
          <span className="size-[5px] rounded-full border border-[#8ea2c4] bg-[#c4d4ec]" />
          <i className="font-['Liberation_Serif'] text-[11px] font-bold text-[#333]">f<span className="text-[8px]">x</span></i>
        </div>
        <div className="ml-auto flex h-full w-3 flex-col items-center justify-center border border-[#8aa4cc] bg-[#c5daf5]">
          <svg viewBox="0 0 8 9" className="h-[8px] w-[7px]" fill="none" stroke="#111" strokeWidth="1.500"><path d="M1 1l3 2.500L7 1M1 5l3 2.500L7 5" /></svg>
        </div>
      </div>
      <Sheet />
      <SheetTabs />
      <StatusBar />
    </div>
  );
}

/* ---------- chat ---------- */

function Msg({ name, nw, to, av, color, text, tw, bw }: { name: React.ReactNode; nw: number; to?: React.ReactNode; av: string; color: string; text: string; tw: number; bw: string }) {
  return (
    <div className="h-[67.400px] shrink-0">
      <div className="flex h-5 items-center gap-[4px] pl-[55px] text-[11.500px] leading-none text-[#75757f]">
        <T w={nw}>{name}</T>
        <T w={49} c="text-[#2378e6]">{to || "Everyone"}</T>
      </div>
      <div className="flex h-[34px] items-start pl-5">
        <div className={`mt-[2px] flex h-[26px] w-[26px] items-center justify-center rounded-[6px] pb-[2px] text-[10px] leading-none text-white/90 ${color}`}>{av}</div>
        <div className={`ml-[9px] flex h-[34px] items-center justify-center rounded-[10px] bg-[#f2f2f7] pr-px text-[13.500px] leading-none text-[#45454f] ${bw}`}><T w={tw}>{text}</T></div>
      </div>
    </div>
  );
}

function Chat() {
  return (
    <div className="relative flex h-[598px] w-[292px] shrink-0 flex-col overflow-hidden bg-white">
      <div className="flex h-[463px] shrink-0 overflow-hidden">
        <div className="-mt-[10.400px] flex w-[286px] shrink-0 flex-col">
          <Msg name="Venkatakrishna to" nw={93} av="V" color="bg-[#2179bb]" text="NO" tw={20} bw="w-[39px]" />
          <Msg name="<Shreya Dahake> <BE> to" nw={140} av="<D" color="bg-[#fc9a0c]" text="no" tw={15} bw="w-[35px]" />
          <Msg name={<>{"<Ravigupta> <9"}<span className="text-[#ececf1]">am</span>{"> to"}</>} nw={124} to={<><span className="text-[#e3eefd]">Eve</span>ryone</>} av="<" color="bg-[#dd5b03]" text="no" tw={15} bw="w-[35px]" />
          <Msg name={"<Yogesh Patil> <mech 9A...   to"} nw={164} av="<P" color="bg-[#0c9080]" text="no" tw={15} bw="w-[35px]" />
          <Msg name="Radha Shinde to" nw={88} av="RS" color="bg-[#8d4fad]" text="No" tw={19} bw="w-[37px]" />
          <Msg name={"<Rama Gopal Kurukuntla...   to"} nw={164} av="<G" color="bg-[#fc9a0c]" text="not Sychornized" tw={98} bw="w-[117px]" />
          <Msg name="<Abhinav k> <9AM> to" nw={124} av="<K" color="bg-[#c94128]" text="yes" tw={20} bw="w-[38px]" />
        </div>
        <div className="flex w-[6px] items-end bg-[#f2f2f7] pb-[2px]"><span className="block h-[7px] w-[6px] rounded-l-full bg-[#a5a5ab]" /></div>
      </div>
      <div className="flex h-[23px] shrink-0 items-center border-b border-[#e6e7f0] bg-[#f7f8fc] pl-[36px] text-[11.500px] leading-none text-[#70707c]">
        <svg viewBox="0 0 13 13" className="mr-[3px] size-[13px]" fill="none" stroke="#6d7280">
          <circle cx="5.500" cy="3.500" r="2.600" /><path d="M5 12H1c0-3 2-4 4.500-4" /><circle cx="9.500" cy="9.800" r="3" fill="#0e6fee" stroke="none" />
        </svg>
        <T w={211}>Who can see your messages? Recording On</T>
      </div>
      <div className="mt-[10px] flex h-[22px] shrink-0 items-center pl-4 text-[11px] leading-none text-[#4b4b55]">
        <T w={13}>To:</T>
        <div className="ml-[9px] flex h-[21px] w-[118px] items-center rounded-[5px] bg-[#f2f2f7] pl-[6px] font-semibold text-[#33333c]">
          <T w={93}>Hosts and panelists</T>
          <svg viewBox="0 0 8 6" className="ml-[4px] h-[6px] w-2" fill="none" stroke="#333" strokeWidth="1.600"><path d="M1 1l3 3 3-3" /></svg>
        </div>
        <svg viewBox="0 0 14 14" className="ml-[110px] size-[14px]" fill="none" stroke="#6c6c76"><circle cx="7" cy="7" r="6" /><path d="M4 8c1 3 5 3 6 0" /><path d="M4.900 4.300v1.500M9.100 4.300v1.500" /></svg>
      </div>
      <div className="mt-[9px] pl-4 text-[11.500px] leading-none text-[#858590]"><T w={209}>Your text can only be seen by panelists</T></div>
      <span className="absolute left-[160px] top-[88px] h-[62px] w-px bg-[#dcdce0]" />
    </div>
  );
}

/* ---------- recorded taskbar ---------- */

function InnerTaskbar() {
  return (
    <div className="flex h-[33px] shrink-0 items-center bg-[#eeeeee] text-[#333]">
      <div className="flex w-[45px] shrink-0 justify-center pt-[3px]"><WinLogo c="size-[15px]" /></div>
      <div className="flex h-full w-[317px] shrink-0 items-center border-x border-[#cfcfcf] bg-white pl-[9px] pt-[3px]">
        <Magnifier c="size-4" />
        <T w={118} c="ml-[10px] pt-[2px] text-[13.500px] leading-none text-[#454545]">Type here to search</T>
      </div>
      <div className="flex h-full w-[543px] shrink-0 items-center">
        {[Cortana, TaskView, Edge, Folder, Store, Gift, Mail, Rec, Zoom, Snip, Chrome, Sticky].map((I, i) => (
          <div key={i} className={`flex h-full flex-1 items-center justify-center pt-[3px] ${I === Zoom ? "bg-[#fdbf89]" : ""} ${i < 2 ? "pr-[2px]" : ""}`}><I /></div>
        ))}
      </div>
      <div className="ml-auto flex items-center pt-[2px]">
        <Chevron />
        <svg viewBox="0 0 14 16" className="ml-[9px] h-4 w-[14px]" fill="none" stroke="#222" strokeWidth="1.200"><path d="M1.500 5h6.500v6.500H1.500zM8 6.500h2.500V10H8M3 2.500c2-1.500 4-1.500 6 0M3 14c2 1.500 4 1.500 6 0" /></svg>
        <svg viewBox="0 0 14 14" className="ml-[7px] size-[14px]"><circle cx="7" cy="7" r="5.800" fill="#fff" stroke="#cf6f48" strokeWidth="1.700" /></svg>
        <svg viewBox="0 0 16 12" className="ml-[7px] h-3 w-4"><path d="M6.500 2.500h7.500v7H5" fill="none" stroke="#111" strokeWidth="1.300" /><path d="M7.500 4h4v4h-4zM14.500 4.500h1.200V7.500h-1.200zM1 3h5v3c0 2-1.500 2-2 2v2H2.800V8C1.500 8 1 7 1 6zM1.800 1h1v2h-1zM4.200 1h1v2h-1z" fill="#111" /></svg>
        <svg viewBox="0 0 16 16" className="ml-[6px] size-4"><path d="M1 3l13-2v12H2z" fill="none" stroke="#111" strokeWidth="1.200" /><path d="M9.500 5.500L5 6.500v3.500h3M5.500 8.500h3" stroke="#222" strokeWidth="1.300" fill="none" /><circle cx="12" cy="12" r="3.200" fill="#2469b3" /></svg>
        <span className="ml-[8px]"><Wifi /></span>
        <svg viewBox="0 0 16 14" className="ml-[6px] h-[14px] w-4" fill="none" stroke="#222" strokeWidth="1.200"><path d="M1 5h2.500L6.500 2v10l-3-3H1zM8.500 5c1 1 1 3 0 4M10.700 3.500c2 2 2 5 0 7M13 2c2.700 3 2.700 7 0 10" /></svg>
        <T w={22} c="ml-[8px] text-[11.500px] leading-none">ENG</T>
        <div className="ml-[12px] flex w-[54px] flex-col items-center gap-[4px] text-[11px] leading-[12px]"><T w={26}>22:24</T><T w={54}>01-03-2022</T></div>
        <span className="ml-[15px] mr-[12px] mt-[2px]"><Notif n="3" /></span>
      </div>
    </div>
  );
}

/* ---------- player controls ---------- */

const Btn = ({ c = "size-6", d, vb = "0 0 24 24", stroke }: { c?: string; d: string; vb?: string; stroke?: string }) => (
  <div className={`shrink-0 border border-[#adadad] bg-[#e1e1e1] ${c}`}>
    <svg viewBox={vb} className="size-full" fill="#6f6f6f"><path d={d} />{stroke && <path d={stroke} fill="none" stroke="#6f6f6f" strokeWidth="2.400" />}</svg>
  </div>
);

function Controls() {
  return (
    <div className="flex h-[52px] shrink-0 flex-col bg-[#f0f0f0]">
      <div className="flex h-5 items-center text-[11px] leading-none text-black">
        <T w={38} c="ml-[9px] pb-[2px]">1:19:15</T>
        <div className="ml-[17px] mt-[-2px] h-[9px] w-[1241px] shrink-0 overflow-hidden rounded-[3px] bg-linear-to-b from-[#b8b8b8] to-[#dcdcdc]">
          <div className="h-full w-[817px] rounded-r-[4px] border-t border-[#2a6cb4] bg-[#2a80d2]" />
        </div>
        <T w={38} c="ml-[16px] pb-[2px]">2:00:20</T>
      </div>
      <div className="flex h-[30px] items-center pl-1">
        <Btn c="size-[30px]" vb="0 0 30 30" d="M8 6l15 9-15 9z" />
        <div className="ml-[14px] flex gap-[2px]">
          <Btn d="M3.500 7h2.300v10H3.500zM13 7v10l-6.500-5zM20.500 7v10L14 12z" />
          <Btn d="M6.500 6.500h11v11h-11z" />
          <Btn d="M3.500 7v10l6.500-5zM11 7v10l6.500-5zM18.200 7h2.300v10h-2.300z" />
        </div>
        <div className="ml-[14px] flex gap-[2px]">
          <Btn d="" stroke="M9 5H4.500V9M15 5h4.500V9M4.500 15v4H9M19.500 15v4H15" />
          <Btn d="M2.500 6h6v3h-6zM9.500 14h5v3h-5zM15.500 9.500h6v3h-6z" stroke="M5.500 5v14M12 5v14M18.500 5v14" />
        </div>
        <div className="ml-[14px] flex gap-[2px]">
          <Btn d="M15.500 13.500l5 3.500-5 3.500z" stroke="M4.500 6.500h14M4.500 11.500h14M4.500 17h9" />
          <Btn d="M16 3l4 3.500-4 3.500zM8 14v7L4 17.500z" stroke="M5.500 12.500V6.500h11M18.500 12v5.500H8" />
          <Btn d="M20.500 4v6l-6-6zM20.500 20v-6l-6 6z" stroke="M4.500 6h2l11.500 11.500M5 18.500L18 6.500" />
        </div>
        <svg viewBox="0 0 16 14" className="ml-auto mt-[16px] h-[13px] w-4">
          <path d="M1 5h2.500L7 1.500v11L3.500 9H1z" fill="#7d7d7d" />
          <path d="M9 4.500c1 1.500 1 3.500 0 5M11 3c2 2.500 2 5.500 0 8M13 1.500c2.700 3 2.700 8 0 11" stroke="#f2951f" strokeWidth="1.300" fill="none" />
        </svg>
        <div className="relative ml-[4px] mr-[4px] mt-[5px] h-[24px] w-[76px] shrink-0">
          <svg viewBox="0 0 76 24" className="h-6 w-[76px]">
            <defs><linearGradient id="vg"><stop offset="0" stopColor="#a8d8a5" /><stop offset=".45" stopColor="#35c435" /><stop offset=".74" stopColor="#1fc91f" /><stop offset=".85" stopColor="#e8c71b" /><stop offset=".95" stopColor="#f0501e" /></linearGradient></defs>
            <path d="M2 20.500L73.500 1.500v20H2z" fill="url(#vg)" stroke="#777" strokeWidth="1.500" strokeLinejoin="round" />
          </svg>
          <T w={25} c="absolute left-[5px] top-[2px] text-[10px] leading-none text-[#777]">125%</T>
        </div>
      </div>
    </div>
  );
}

/* ---------- desktop taskbar ---------- */

const APPS: [React.ReactNode, number][] = [
  [<Folder />, 2], [<Chrome badge />, 1], [<Snip />, 1], [<Store />, 0], [<Zoom />, 0], [<Sticky />, 2], [<Rec />, 0],
  [<Notepad />, 1], [<Telegram />, 1], [<Photos />, 2], [<Git />, 1], [<Spring />, 1], [<Cone c="size-6" />, 3],
];

function Taskbar() {
  return (
    <div className="flex h-[39px] shrink-0 items-center bg-linear-to-r from-[#d0e3ed] via-[#d9e3e6] to-[#cfdfe9] text-[#1c1c1c]">
      <div className="flex w-[48px] shrink-0 justify-center"><WinLogo c="size-4" /></div>
      <div className="flex h-full w-[344px] shrink-0 items-center border border-b-0 border-[#c3c9cc] bg-white pl-[11px]">
        <Magnifier c="size-4" />
        <T w={128} c="ml-[12px] pt-px text-[14px] leading-none text-[#333]">Type here to search</T>
      </div>
      <div className="flex w-[48px] shrink-0 justify-center"><Cortana /></div>
      <div className="flex w-[48px] shrink-0 justify-center"><TaskView /></div>
      <div className="ml-[2px] flex h-full">
        {APPS.map(([icon, state], i) => (
          <div key={i} className={`flex h-full w-[49px] flex-col items-center justify-between pt-[8px] ${state === 3 ? "bg-[#f0f6f9]" : ""}`}>
            {icon}
            {state === 0 && <span />}
            {state === 1 && <span className="h-[2px] w-10 bg-[#0a72c7]" />}
            {state === 2 && <span className="flex h-[2px] w-10 bg-[#6fa9d6]"><i className="w-8 bg-[#0a72c7]" /></span>}
            {state === 3 && <span className="h-[2px] w-full bg-[#0a72c7]" />}
          </div>
        ))}
      </div>
      <div className="ml-auto flex h-full items-center">
        <Chevron />
        <span className="ml-[12px]"><Wifi /></span>
        <div className="ml-[9px] flex w-[24px] flex-col items-center gap-[4px] text-[12px] leading-[13px]"><T w={24}>ENG</T><T w={12}>IN</T></div>
        <div className="ml-[11px] flex w-[58px] flex-col items-center gap-[4px] text-[12px] leading-[13px]"><T w={27}>14:56</T><T w={58}>08-03-2022</T></div>
        <span className="ml-[17px] mr-[13px] mt-[4px]"><Notif n="2" /></span>
        <span className="mr-[3px] h-full w-px bg-[#aeb9bf]" />
      </div>
    </div>
  );
}

export default function App() {
  const menu: [React.ReactNode, number][] = [
    [<><u>M</u>edia</>, 33], [<>P<u>l</u>ayback</>, 47], [<><u>A</u>udio</>, 32], [<><u>V</u>ideo</>, 30],
    [<>Subti<u>t</u>le</>, 40], [<>Tool<u>s</u></>, 27], [<>V<u>i</u>ew</>, 25], [<><u>H</u>elp</>, 25],
  ];
  return (
    <div className="flex h-[767px] w-[1365px] flex-col overflow-hidden bg-white font-['Open_Sans','Noto_Sans',sans-serif] text-black">
      <header className="flex h-6 shrink-0 items-center pl-[2px] text-[12px] leading-none">
        <Cone c="size-4 shrink-0" />
        <T w={345} c="ml-[5px]">1014 HK_CoreJava_01_03_2022_collection.mp4 - VLC media player</T>
        <svg viewBox="0 0 104 12" className="mb-[4px] ml-auto mr-[18px] h-3 w-[104px]" fill="none" stroke="#111">
          <path d="M2 6.500h10M47.500 4.500h7v7h-7zM49.500 4V2h7v7H55M94 1.500l9 9M103 1.500l-9 9" />
        </svg>
      </header>
      <nav className="flex h-5 shrink-0 items-center gap-4 pl-2 text-[12px] leading-none">
        {menu.map(([m, w], i) => <T key={i} w={w}>{m}</T>)}
      </nav>
      <main className="relative flex h-[632px] shrink-0 bg-black pl-[54px]">
        <div className="flex w-[1258px] flex-col">
          <div className="flex h-[598px] shrink-0">
            <div className="w-[966px] shrink-0 bg-[#1a1a1a]"><Excel /></div>
            <Chat />
          </div>
          <InnerTaskbar />
        </div>
        <span className="absolute left-[979px] top-0 h-[2px] w-[333px] bg-[#5b5859]" />
        <svg viewBox="0 0 12 12" className="absolute left-[872px] top-[471px] size-3">
          <path d="M4 1h4v3h3v4H8v3H4V8H1V4h3z" fill="#fff" stroke="#222" strokeWidth="1.400" />
        </svg>
      </main>
      <Controls />
      <Taskbar />
    </div>
  );
}
